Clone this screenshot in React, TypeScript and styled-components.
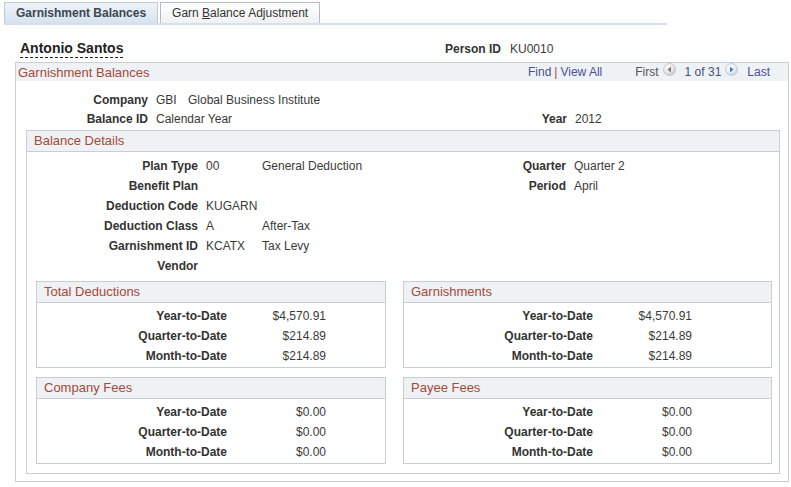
import React from 'react';
import styled, { createGlobalStyle } from 'styled-components';

const GlobalStyle = createGlobalStyle`
  body {
    margin: 0;
    background: #fff;
    font-family: "Liberation Sans", Arial, sans-serif;
    font-size: 12px;
    color: #333;
  }
`;

const LINE = '#c9ced4';
const BAND = '#eff2f4';
const TITLE = '#a8473a';
const LINK = '#4d4f9a';

const Page = styled.div`
  width: 791px;
  height: 487px;
  overflow: hidden;
`;

const TabBar = styled.div`
  display: flex;
  align-items: flex-end;
  gap: 2px;
  width: 663px;
  margin: 2px 0 0 4px;
  border-bottom: 2px solid #d5e0ed;
`;

const Tab = styled.div<{ $active?: boolean }>`
  height: 20px;
  line-height: 20px;
  padding: 0 11px;
  border: 1px solid ${(p) => (p.$active ? '#bccada' : '#b3bcc6')};
  border-bottom: none;
  background: ${(p) => (p.$active
    ? 'linear-gradient(#eef3f9, #d8e2ee)'
    : 'linear-gradient(#ffffff, #f1f1f1)')};
  font-weight: ${(p) => (p.$active ? 'bold' : 'normal')};
  color: ${(p) => (p.$active ? '#3c4652' : '#333')};
  white-space: nowrap;
`;

const HeaderRow = styled.div`
  display: grid;
  grid-template-columns: 425px auto;
  align-items: center;
  padding: 15px 0 0 20px;
  margin-bottom: 4px;
`;

const Name = styled.div`
  justify-self: start;
  font-size: 14px;
  font-weight: bold;
  line-height: 16px;
  color: #222;
  padding-bottom: 1px;
  border-bottom: 1px dashed #222;
`;

const PersonField = styled.div`
  display: flex;
  gap: 9px;
`;

const Label = styled.span`
  font-weight: bold;
  color: #333;
  text-align: right;
  white-space: nowrap;
`;

const Value = styled.span<{ $right?: boolean }>`
  color: #3a3a3a;
  white-space: nowrap;
  text-align: ${(p) => (p.$right ? 'right' : 'left')};
`;

const Code = styled.span<{ $w: number }>`
  display: inline-block;
  width: ${(p) => p.$w}px;
`;

const Panel = styled.div`
  margin-left: 15px;
  width: 774px;
  box-sizing: border-box;
  border: 1px solid ${LINE};
  padding-bottom: 7px;
`;

const PanelHeader = styled.div`
  display: flex;
  align-items: center;
  height: 18px;
  padding: 0 18px 0 2px;
  background: ${BAND};
`;

const Title = styled.div`
  flex: 1;
  font-size: 13px;
  color: ${TITLE};
  white-space: nowrap;
`;

const Nav = styled.div`
  display: flex;
  align-items: center;
  white-space: nowrap;
`;

const Link = styled.span`
  color: ${LINK};
`;

const Sep = styled.span`
  color: ${TITLE};
  margin: 0 3px;
`;

const Pager = styled.div`
  display: flex;
  align-items: center;
  margin-left: 33px;
`;

const Muted = styled.span`
  color: #555;
`;

const Count = styled.span`
  color: #45507e;
`;

const IconWrap = styled.span`
  display: flex;
  margin: 0 9px 6px 4px;
`;

const PanelBody = styled.div`
  padding-top: 9px;
`;

const FieldRow = styled.div<{ $cols: string; $h: number }>`
  display: grid;
  grid-template-columns: ${(p) => p.$cols};
  column-gap: 8px;
  align-items: center;
  height: ${(p) => p.$h}px;
`;

const Section = styled.div`
  margin: 2px 8px 0 10px;
  border: 1px solid ${LINE};
  padding-bottom: 9px;
`;

const SectionHeader = styled.div`
  height: 20px;
  line-height: 20px;
  padding-left: 7px;
  background: ${BAND};
  border-bottom: 1px solid ${LINE};
  font-size: 13px;
  color: ${TITLE};
`;

const SectionBody = styled.div`
  padding-top: 4px;
`;

const SubGrid = styled.div`
  display: grid;
  grid-template-columns: 350px 369px;
  column-gap: 17px;
  row-gap: 9px;
  padding: 5px 0 0 9px;
`;

const SubBox = styled.div`
  border: 1px solid ${LINE};
  padding-bottom: 1px;
`;

const SubBody = styled.div`
  padding-top: 3px;
`;

const AmountRow = styled.div<{ $label: number }>`
  display: grid;
  grid-template-columns: ${(p) => p.$label}px 99px;
  align-items: center;
  height: 20px;
`;

const NavIcon: React.FC<{ dir: 'prev' | 'next' }> = ({ dir }) => {
  const id = `nav-${dir}`;
  const active = dir === 'next';
  return (
    <svg width="13" height="13" viewBox="0 0 13 13">
      <defs>
        <radialGradient id={id} cx="0.4" cy="0.35" r="0.7">
          <stop offset="0" stopColor="#ffffff" />
          <stop offset="0.6" stopColor={active ? '#e4ecf6' : '#e6e6e6'} />
          <stop offset="1" stopColor={active ? '#b9c8dc' : '#bdbdbd'} />
        </radialGradient>
      </defs>
      <circle cx="6.5" cy="6.5" r="6" fill={`url(#${id})`} stroke={active ? '#b8c6d8' : '#c2c2c2'} strokeWidth="0.8" />
      {active ? (
        <path d="M5 3.6 L8.6 6.5 L5 9.4 Z" fill="#3f7fcf" />
      ) : (
        <path d="M8 3.6 L4.4 6.5 L8 9.4 Z" fill="#7a7a7a" />
      )}
    </svg>
  );
};

type Amount = { label: string; value: string };

const ytd = (y: string, q: string, m: string): Amount[] => [
  { label: 'Year-to-Date', value: y },
  { label: 'Quarter-to-Date', value: q },
  { label: 'Month-to-Date', value: m },
];

const boxes: { title: string; labelW: number; rows: Amount[] }[] = [
  { title: 'Total Deductions', labelW: 190, rows: ytd('$4,570.91', '$214.89', '$214.89') },
  { title: 'Garnishments', labelW: 189, rows: ytd('$4,570.91', '$214.89', '$214.89') },
  { title: 'Company Fees', labelW: 190, rows: ytd('$0.00', '$0.00', '$0.00') },
  { title: 'Payee Fees', labelW: 189, rows: ytd('$0.00', '$0.00', '$0.00') },
];

type Detail = { label: string; code?: string; desc?: string; rightLabel?: string; rightValue?: string };

const details: Detail[] = [
  { label: 'Plan Type', code: '00', desc: 'General Deduction', rightLabel: 'Quarter', rightValue: 'Quarter 2' },
  { label: 'Benefit Plan', rightLabel: 'Period', rightValue: 'April' },
  { label: 'Deduction Code', code: 'KUGARN' },
  { label: 'Deduction Class', code: 'A', desc: 'After-Tax' },
  { label: 'Garnishment ID', code: 'KCATX', desc: 'Tax Levy' },
  { label: 'Vendor' },
];

const mainCols = '132px 303px 100px auto';
const detailCols = '171px 252px 100px auto';

const App: React.FC = () => (
  <Page>
    <GlobalStyle />
    <TabBar>
      <Tab $active>Garnishment Balances</Tab>
      <Tab>
        Garn <u>B</u>alance Adjustment
      </Tab>
    </TabBar>

    <HeaderRow>
      <Name>Antonio Santos</Name>
      <PersonField>
        <Label>Person ID</Label>
        <Value>KU0010</Value>
      </PersonField>
    </HeaderRow>

    <Panel>
      <PanelHeader>
        <Title>Garnishment Balances</Title>
        <Nav>
          <Link>Find</Link>
          <Sep>|</Sep>
          <Link>View All</Link>
        </Nav>
        <Pager>
          <Muted>First</Muted>
          <IconWrap><NavIcon dir="prev" /></IconWrap>
          <Count>1 of 31</Count>
          <IconWrap><NavIcon dir="next" /></IconWrap>
          <Link>Last</Link>
        </Pager>
      </PanelHeader>

      <PanelBody>
        <FieldRow $cols={mainCols} $h={19}>
          <Label>Company</Label>
          <Value>
            <Code $w={32}>GBI</Code>
            Global Business Institute
          </Value>
        </FieldRow>
        <FieldRow $cols={mainCols} $h={19}>
          <Label>Balance ID</Label>
          <Value>Calendar Year</Value>
          <Label>Year</Label>
          <Value>2012</Value>
        </FieldRow>

        <Section>
          <SectionHeader>Balance Details</SectionHeader>
          <SectionBody>
            {details.map((d) => (
              <FieldRow key={d.label} $cols={detailCols} $h={20}>
                <Label>{d.label}</Label>
                <Value>
                  {d.code && <Code $w={56}>{d.code}</Code>}
                  {d.desc}
                </Value>
                <Label>{d.rightLabel}</Label>
                <Value>{d.rightValue}</Value>
              </FieldRow>
            ))}
            <SubGrid>
              {boxes.map((b) => (
                <SubBox key={b.title}>
                  <SectionHeader>{b.title}</SectionHeader>
                  <SubBody>
                    {b.rows.map((r) => (
                      <AmountRow key={r.label} $label={b.labelW}>
                        <Label>{r.label}</Label>
                        <Value $right>{r.value}</Value>
                      </AmountRow>
                    ))}
                  </SubBody>
                </SubBox>
              ))}
            </SubGrid>
          </SectionBody>
        </Section>
      </PanelBody>
    </Panel>
  </Page>
);

export default App;
